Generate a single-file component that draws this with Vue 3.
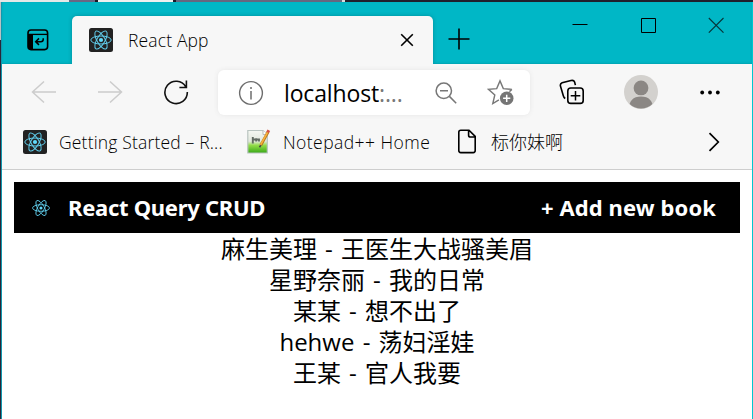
<script setup>
import { h } from 'vue'

const books = [
  { author: '麻生美理', title: '王医生大战骚美眉' },
  { author: '星野奈丽', title: '我的日常' },
  { author: '某某', title: '想不出了' },
  { author: 'hehwe', title: '荡妇淫娃' },
  { author: '王某', title: '官人我要' },
]

const ReactIcon = (props) =>
  h('svg', { viewBox: '0 0 24 24', width: props.size, height: props.size }, [
    props.tile ? h('rect', { width: 24, height: 24, rx: 2.5, fill: '#222' }) : null,
    h('g', { fill: 'none', stroke: '#61cfee', 'stroke-width': props.tile ? 1 : 1.15 },
      [0, 60, 120].map((a) =>
        h('ellipse', { cx: 12, cy: 12, rx: props.tile ? 10.2 : 11.3, ry: props.tile ? 4 : 4.4, transform: `rotate(${a} 12 12)` })
      )
    ),
    h('circle', { cx: 12, cy: 12, r: 2.1, fill: '#61dafb' }),
  ])
ReactIcon.props = ['size', 'tile']
</script>

<template>
  <div class="desktop">
    <div class="backdrop"><i class="pale"></i><i class="slate"></i><i class="ink"></i><i class="light"></i><i class="ink"></i><i class="mist"></i><i class="spot"></i><i class="night"></i></div>
    <div class="middle">
      <div class="side"></div>
      <div class="window">
        <div class="titlebar">
          <svg class="tab-actions" width="22" height="22" viewBox="0 0 22 22">
            <rect x="1" y="1" width="19.6" height="19.6" rx="3" fill="none" stroke="#000" stroke-width="1.6" />
            <path d="M1 5.4h19.5" stroke="#000" stroke-width="1.3" />
            <path d="M1 5.4h5v15H3q-2 0-2-2z" />
            <path d="M16.2 9.2v1.3q0 2.2-2.4 2.2H9M12 9.4l-3.3 3.3 3.3 3.2" fill="none" stroke="#000" stroke-width="1.5" />
          </svg>
          <div class="tab">
            <ReactIcon :size="24" :tile="true" />
            <span class="tab-title">React App</span>
            <svg class="tab-close" width="14" height="14" viewBox="0 0 14 14"><path d="M1.2 1.2l11.6 11.6M12.8 1.2L1.2 12.8" stroke="#000" stroke-width="1.6" /></svg>
          </div>
          <svg class="new-tab" width="22" height="22" viewBox="0 0 22 22"><path d="M11 .5v21M.5 11h21" stroke="#000" stroke-width="1.6" /></svg>
          <div class="caption">
            <svg width="16" height="16" viewBox="0 0 16 16"><path d="M.5 7.5h15" stroke="#000" /></svg>
            <svg width="16" height="16" viewBox="0 0 16 16"><path d="M1.5 1.5h14v14h-14z" fill="none" stroke="#000" /></svg>
            <svg width="16" height="16" viewBox="0 0 16 16"><path d="M.8 1l14.7 14.7M15.5 1L.8 15.7" stroke="#07363a" stroke-width="1.1" /></svg>
          </div>
        </div>

        <div class="toolbar">
          <svg class="back" width="26" height="24" viewBox="0 0 26 24"><path d="M25 12H1.5M13 1.5L1.5 12 13 22.5" fill="none" stroke="#ccc" stroke-width="1.5" /></svg>
          <svg class="forward" width="26" height="24" viewBox="0 0 26 24"><path d="M1 12h23.5M13 1.5L24.5 12 13 22.5" fill="none" stroke="#ccc" stroke-width="1.5" /></svg>
          <svg class="reload" width="26" height="26" viewBox="0 0 26 26"><path d="M22.8 7.8A11.2 11.2 0 1 0 24.3 13M23.4 1.5v7h-7" fill="none" stroke="#111" stroke-width="1.6" /></svg>
          <div class="address">
            <svg class="info" width="26" height="26" viewBox="0 0 26 26"><circle cx="13" cy="13" r="11.4" fill="none" stroke="#6d6d6d" stroke-width="1.4" /><path d="M13 11v8.5M13 7v2" stroke="#6d6d6d" stroke-width="1.5" /></svg>
            <span class="url">localhost<span class="dim">:...</span></span>
            <svg class="zoom-out" width="22" height="22" viewBox="0 0 22 22"><circle cx="8.8" cy="8.8" r="7.7" fill="none" stroke="#777" stroke-width="1.5" /><path d="M5 8.8h8M14.4 14.4l6.8 6.8" stroke="#777" stroke-width="1.5" /></svg>
            <svg class="favorite" width="28" height="27" viewBox="0 0 28 27">
              <path d="M24.9 10.4l-8.6-.8L13 1.9 9.7 9.6l-8.2.8 6.3 5.5-2 8.6 6.1-3.7M24.9 10.4l-2.5 2.2" fill="none" stroke="#777" stroke-width="1.4" />
              <circle cx="19.7" cy="19.3" r="6.8" fill="#757575" /><path d="M19.7 15.7v7.2M16.1 19.3h7.2" stroke="#fff" stroke-width="1.5" />
            </svg>
          </div>
          <svg class="collections" width="26" height="26" viewBox="0 0 26 26">
            <path d="M6.2 19.5C5.2 18.8 4.7 18 4.4 17L1.5 7.2q-.7-2.5 1.6-3.4L12 1.5q2.8-.7 3.6 1.6l.8 3" fill="none" stroke="#000" stroke-width="1.6" />
            <rect x="8.8" y="9" width="15.4" height="15.4" rx="3" fill="none" stroke="#000" stroke-width="1.6" />
            <path d="M16.5 12v9.6M11.7 16.8h9.6" stroke="#000" stroke-width="1.5" />
          </svg>
          <svg class="avatar" width="34" height="34" viewBox="0 0 34 34">
            <clipPath id="round"><circle cx="17" cy="17" r="16.5" /></clipPath>
            <circle cx="17" cy="17" r="17" fill="#d3d1ce" />
            <circle cx="17" cy="12.9" r="7.4" fill="#8b8784" />
            <path d="M5 34q0-12.5 12-12.5T29 34z" fill="#8b8784" clip-path="url(#round)" />
          </svg>
          <svg class="more" width="20" height="5" viewBox="0 0 20 5"><circle cx="2.2" cy="2.5" r="1.9" /><circle cx="10" cy="2.5" r="1.9" /><circle cx="17.8" cy="2.5" r="1.9" /></svg>
        </div>

        <div class="bookmarks">
          <ReactIcon :size="24" :tile="true" />
          <span class="mark first">Getting Started – R...</span>
          <svg class="notepad" width="24" height="25" viewBox="0 0 24 25">
            <defs><linearGradient id="leaf" x1="0" y1="0" x2="0" y2="1"><stop offset="0" stop-color="#f5f7f2" /><stop offset=".48" stop-color="#e2e8dd" /><stop offset=".66" stop-color="#92dc48" /><stop offset="1" stop-color="#38a817" /></linearGradient></defs>
            <path d="M.8 1.5H16l4.3 4V24H.8z" fill="url(#leaf)" stroke="#b9c4c0" stroke-width="1.2" />
            <path d="M16 1.5v4h4.3" fill="#fff" stroke="#bbb" />
            <path d="M5.8 8v6.5M6 10.5h5.5M9.2 9.2v3.2M12 9.5v3" fill="none" stroke="#626b62" stroke-width="1.9" />
            <path d="M21.2 2.8l-7.4 13.4" stroke="#b7791f" stroke-width="2.8" /><path d="M20.8 2.8l-7.2 13" stroke="#f9b13c" stroke-width="1.6" />
            <path d="M20.6 3.4L21.8 1.2" stroke="#d45143" stroke-width="3" /><path d="M13.8 16.2l-1.3 2" stroke="#444" stroke-width="1.6" />
          </svg>
          <span class="mark second">Notepad++ Home</span>
          <svg class="page-icon" width="20" height="25" viewBox="0 0 20 25"><path d="M3.8 1.2H12l6.2 6.2v14.2q0 2-2 2H3.8q-2 0-2-2V3.2q0-2 2-2zM11.6 1.2v5q0 1.8 1.8 1.8h5" fill="none" stroke="#000" stroke-width="1.6" /></svg>
          <span class="mark third">标你妹啊</span>
          <svg class="overflow" width="12" height="20" viewBox="0 0 12 20"><path d="M1.5 1.2L10.3 10l-8.8 8.8" fill="none" stroke="#000" stroke-width="1.7" /></svg>
        </div>

        <main class="page">
          <header class="navbar">
            <ReactIcon :size="18" />
            <span class="brand">React Query CRUD</span>
            <span class="add">+ Add new book</span>
          </header>
          <div v-for="book in books" :key="book.title" class="book">{{ book.author }} - {{ book.title }}</div>
        </main>
      </div>
    </div>
  </div>
</template>

<style>
body { margin: 0; overflow: hidden; }
</style>

<style scoped>
.desktop { width: 753px; height: 419px; display: flex; flex-direction: column; background: #fff; color: #000; font-family: "Noto Sans", "Noto Sans CJK SC", sans-serif; }
svg { display: block; flex: none; }
.backdrop { height: 2px; flex: none; display: flex; }
.backdrop i { height: 2px; }
.pale { width: 69px; background: #e4e8e7; }
.slate { width: 26px; background: #686783; }
.ink { width: 3px; background: #181824; }
.light { width: 75px; background: #edf0ef; }
.mist { width: 166px; background: #66677f; }
.spot { width: 3px; background: #ddd; }
.night { flex: 1; background: #20202d; }
.middle { flex: 1; display: flex; min-height: 0; }
.side { width: 1px; background: linear-gradient(#b9c1c3 0 38px, #292638 38px); }
.window { flex: 1; min-width: 0; border-left: 1px solid #1098ae; border-right: 1px solid #00c7cf; background: #fff; }
.titlebar { height: 62px; background: #00b7c6; display: flex; align-items: flex-start; box-shadow: inset 0 -1px 2px #00a3b2; }
.tab-actions { margin: 27px 0 0 25px; }
.tab { height: 48px; width: 361px; margin: 14px 0 0 23px; background: #f7f7f7; border-radius: 5px 5px 0 0; display: flex; align-items: center; box-sizing: border-box; padding: 0 19px 0 17px; box-shadow: 0 0 4px #008e9b; clip-path: inset(-4px -4px 0 -4px); }
.tab-title { margin-left: 15px; font-family: "Open Sans", sans-serif; font-weight: 350; font-size: 17.5px; letter-spacing: 0.15px; line-height: 24px; }
.tab-close { margin-left: auto; }
.new-tab { margin: 26px 0 0 15px; }
.caption { display: flex; gap: 52px; margin: 15px 0 0 102px; }
.toolbar { height: 56px; background: #f7f7f7; display: flex; align-items: center; }
.back { margin-left: 29px; }
.forward { margin-left: 40px; }
.reload { margin-left: 40px; }
.address { width: 312px; height: 45px; background: #fff; margin: 1px 0 0 29px; border-radius: 6px; box-shadow: 0 0 5px #e6e6e6; display: flex; align-items: center; flex: none; }
.info { margin-left: 20px; }
.url { width: 118px; margin-left: 20px; font-family: "Open Sans", sans-serif; font-weight: 370; font-size: 23px; letter-spacing: -0.15px; line-height: 32px; white-space: nowrap; }
.dim { color: #777; }
.zoom-out { margin-left: 33px; }
.favorite { margin-left: 30px; }
.collections { margin-left: 29px; }
.avatar { margin-left: 39px; }
.more { margin-left: 42px; }
.bookmarks { height: 50px; padding: 0 32px 6px 21px; box-sizing: border-box; background: #f7f7f7; border-bottom: 1px solid #cecece; display: flex; align-items: center; white-space: nowrap; }
.mark { font-family: "Open Sans", "Noto Sans CJK SC", sans-serif; font-weight: 350; font-size: 17.5px; line-height: 24px; }
.first { width: 165px; margin-left: 12px; letter-spacing: 0.17px; }
.notepad { margin-left: 23px; }
.second { width: 148px; margin-left: 12px; letter-spacing: 0.45px; }
.page-icon { margin-left: 26px; }
.third { margin-left: 14px; font-size: 18px; font-weight: 300; }
.overflow { margin-left: auto; }
.page { padding: 12px 12px 0; }
.navbar { height: 51px; background: #000; color: #fff; display: flex; align-items: center; box-sizing: border-box; padding: 0 24px 0 18px; font-weight: 700; font-size: 22px; line-height: 30px; white-space: nowrap; }
.brand { margin-left: 18px; letter-spacing: -0.28px; padding-bottom: 1px; }
.add { margin-left: auto; letter-spacing: 0.1px; padding-bottom: 1px; }
.page .book { height: 31px; line-height: 32px; text-align: center; font-family: "Open Sans", "Noto Sans CJK SC", sans-serif; font-size: 24px; font-weight: 370; word-spacing: 2px; }
</style>
